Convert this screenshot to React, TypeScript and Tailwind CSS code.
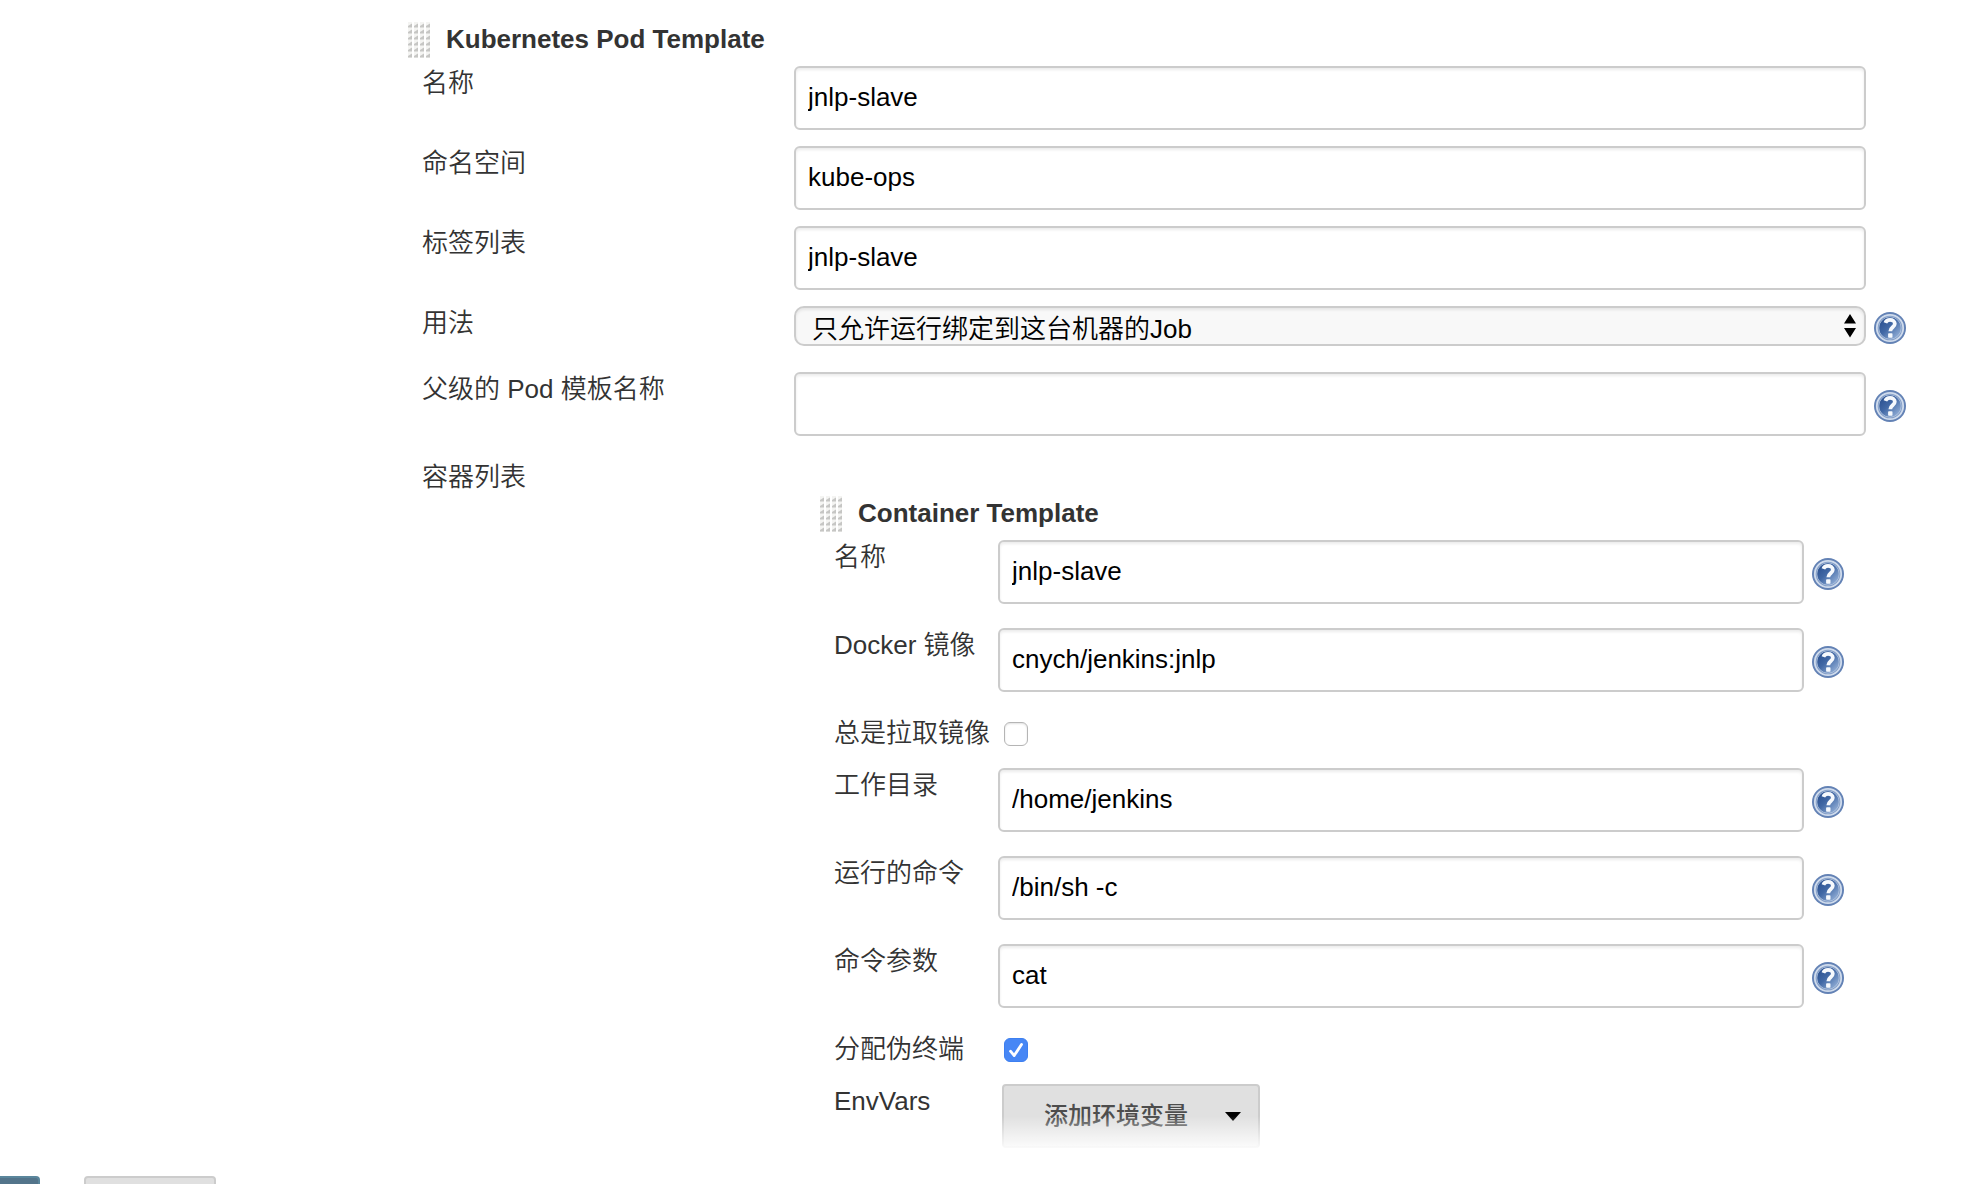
import { useId, useState } from "react";
import type { ReactNode } from "react";

const fieldClass =
  "block h-16 w-full rounded-md border-2 border-[#ccc] bg-white px-3 pb-0.5 text-black outline-none shadow-[inset_0_2px_3px_rgba(0,0,0,0.08)]";

function DragHandle() {
  const dots: ReactNode[] = [];
  for (let row = 0; row < 6; row++) {
    for (let col = 0; col < 4; col++) {
      const x = col * 6;
      const y = row * 6;
      dots.push(
        <g key={`${row}-${col}`}>
          <rect x={x} y={y} width="4" height="6" fill="#f4f4f2" />
          <path d={`M${x + 4} ${y + 1.5}V${y + 5.5}H${x}V${y + 4}Z`} fill="#c6c6c4" />
        </g>,
      );
    }
  }
  return (
    <svg className="shrink-0" width="22" height="36" viewBox="0 0 22 36" aria-hidden="true">
      {dots}
    </svg>
  );
}

function HelpButton({ label }: { label: string }) {
  return (
    <button type="button" aria-label={`帮助: ${label}`} className="block size-8 cursor-pointer">
      <svg width="32" height="32" viewBox="0 0 32 32" aria-hidden="true">
        <defs>
          <linearGradient id="help-fill" x1="0" y1="0" x2="1" y2="1">
            <stop offset="0.1" stopColor="#2a5090" />
            <stop offset="0.45" stopColor="#4168a5" />
            <stop offset="0.9" stopColor="#94b0d8" />
          </linearGradient>
        </defs>
        <circle cx="16" cy="16" r="16" fill="#6382b5" />
        <circle cx="16" cy="16" r="13.200" fill="#7f9ac6" stroke="#cfdbec" strokeWidth="1.800" />
        <circle cx="16" cy="16" r="11.200" fill="url(#help-fill)" stroke="#b4c6e0" strokeWidth="0.800" />
        <path
          d="M11.400 10.800c.7-1.900 2.400-2.900 4.600-2.900 2.800 0 4.800 1.400 4.800 3.800 0 3.500-4.500 3.600-4.500 7.500"
          fill="none"
          stroke="#f6f9fd"
          strokeWidth="3.800"
        />
        <rect x="14.100" y="21.300" width="4.400" height="4.400" rx="0.800" fill="#f6f9fd" />
      </svg>
    </button>
  );
}

function Row({
  id,
  label,
  nested,
  help,
  className,
  helpClass = "pt-[18px]",
  children,
}: {
  id?: string;
  label: string;
  nested?: boolean;
  help?: boolean;
  className: string;
  helpClass?: string;
  children: ReactNode;
}) {
  return (
    <div className={`flex items-start ${className}`}>
      <label
        htmlFor={id}
        className={`shrink-0 leading-[34px] whitespace-nowrap ${nested ? "w-[164px]" : "w-[372px]"}`}
      >
        {label}
      </label>
      <div className="min-w-0 flex-1">{children}</div>
      <div className={`w-10 shrink-0 pl-2 ${helpClass}`}>{help && <HelpButton label={label} />}</div>
    </div>
  );
}

function TextRow({
  label,
  value,
  nested,
  help,
}: {
  label: string;
  value: string;
  nested?: boolean;
  help?: boolean;
}) {
  const id = useId();
  return (
    <Row id={id} label={label} nested={nested} help={help} className={help ? "pb-6" : "pb-4"}>
      <input id={id} type="text" defaultValue={value} className={fieldClass} />
    </Row>
  );
}

function CheckRow({ label, initial }: { label: string; initial: boolean }) {
  const id = useId();
  const [checked, setChecked] = useState(initial);
  return (
    <Row id={id} label={label} nested className="h-[52px]">
      <div className="relative mt-1.5 ml-1.5 size-6">
        <input
          id={id}
          type="checkbox"
          checked={checked}
          onChange={(e) => setChecked(e.target.checked)}
          className="block size-6 appearance-none rounded-md border border-[#b5b5b5] bg-white shadow-[inset_0_1px_2px_rgba(0,0,0,0.12)] checked:border-[#3d7ff0] checked:bg-[#4787f5] checked:shadow-none"
        />
        {checked && (
          <svg
            className="pointer-events-none absolute inset-0"
            width="24"
            height="24"
            viewBox="0 0 24 24"
            fill="none"
            aria-hidden="true"
          >
            <path
              d="M6.500 13.200 10.200 17.600 17.500 6.500"
              stroke="#fff"
              strokeWidth="2.800"
              strokeLinecap="round"
              strokeLinejoin="round"
            />
          </svg>
        )}
      </div>
    </Row>
  );
}

function Heading({ children }: { children: ReactNode }) {
  return (
    <header className="mb-2 flex h-9 gap-4">
      <DragHandle />
      <h2 className="leading-[34px] font-bold">{children}</h2>
    </header>
  );
}

function UsageRow() {
  const id = useId();
  return (
    <Row id={id} label="用法" help className="h-[66px]" helpClass="pt-1.5">
      <div className="relative">
        <select
          id={id}
          className="block h-10 w-full appearance-none rounded-[10px] border-2 border-[#ccc] bg-[#f8f8f8] pt-[5px] pr-10 pl-4 leading-8 text-black outline-none shadow-[inset_0_2px_3px_rgba(0,0,0,0.08)]"
        >
          <option>只允许运行绑定到这台机器的Job</option>
        </select>
        <svg
          className="pointer-events-none absolute top-2 right-2.5"
          width="12"
          height="24"
          viewBox="0 0 12 24"
          aria-hidden="true"
        >
          <path d="M6 0 12 9.500H0ZM0 14H12L6 23.500Z" />
        </svg>
      </div>
    </Row>
  );
}

export default function App() {
  return (
    <div className="relative h-screen overflow-hidden bg-white font-['Liberation_Sans','Noto_Sans_CJK_SC',sans-serif] text-[26px] font-[350] text-[#333]">
      <form className="pt-[22px] pr-[62px] pl-[408px]">
        <Heading>Kubernetes Pod Template</Heading>
        <div className="pl-3.5">
          <TextRow label="名称" value="jnlp-slave" />
          <TextRow label="命名空间" value="kube-ops" />
          <TextRow label="标签列表" value="jnlp-slave" />
          <UsageRow />
          <TextRow label="父级的 Pod 模板名称" value="" help />
          <Row label="容器列表" className="">
            <section className="mr-[22px] ml-[26px] pt-9">
              <Heading>Container Template</Heading>
              <div className="pl-3.5">
                <TextRow nested label="名称" value="jnlp-slave" help />
                <TextRow nested label="Docker 镜像" value="cnych/jenkins:jnlp" help />
                <CheckRow label="总是拉取镜像" initial={false} />
                <TextRow nested label="工作目录" value="/home/jenkins" help />
                <TextRow nested label="运行的命令" value="/bin/sh -c" help />
                <TextRow nested label="命令参数" value="cat" help />
                <CheckRow label="分配伪终端" initial />
                <Row nested label="EnvVars" className="pb-9">
                  <button
                    type="button"
                    className="ml-1 flex h-16 w-[258px] items-center justify-between rounded-sm border-2 border-[#ccc] bg-[#e0e0e0] pr-[17px] pl-10 text-2xl font-medium text-[#4d4d4d]"
                  >
                    添加环境变量
                    <svg width="16" height="9" viewBox="0 0 16 9" aria-hidden="true">
                      <path d="M0 0H16L8 9Z" fill="#000" />
                    </svg>
                  </button>
                </Row>
              </div>
            </section>
          </Row>
        </div>
      </form>
      <footer className="absolute inset-x-0 bottom-0">
        <div className="h-8 bg-linear-to-b from-white/0 to-white/90" />
        <div className="h-9 bg-white pt-7">
          <div className="flex h-2 gap-11 overflow-hidden">
            <button
              type="button"
              aria-label="保存"
              className="h-16 w-10 shrink-0 rounded-tr-sm border-t-2 border-r-2 border-[#5a869c] bg-[#53748a]"
            />
            <button
              type="button"
              aria-label="应用"
              className="h-16 w-[132px] shrink-0 rounded-sm border-2 border-[#ccc] bg-[#e0e0e0]"
            />
          </div>
        </div>
      </footer>
    </div>
  );
}
